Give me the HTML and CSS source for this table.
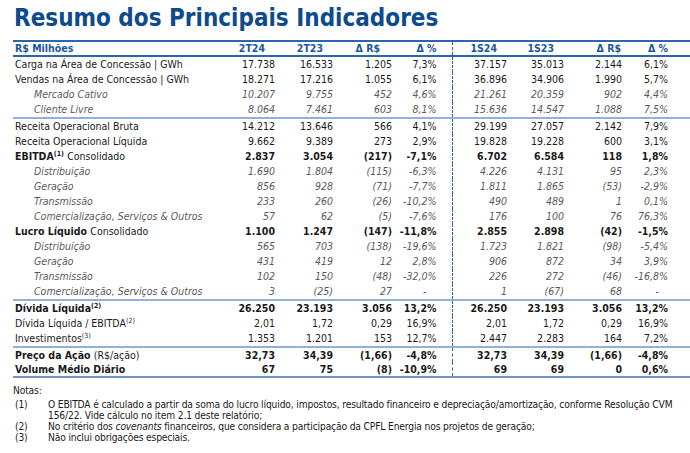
FILE: index.html
```html
<!DOCTYPE html>
<html lang="pt">
<head>
<meta charset="utf-8">
<link rel="stylesheet" href="styles.css">
</head>
<body>
<div class="page">
  <h1 class="title">Resumo dos Principais Indicadores</h1>
  <table class="ind">
    <colgroup>
      <col class="c-label"><col class="c1"><col class="c2"><col class="c3"><col class="c4">
      <col class="c5"><col class="c6"><col class="c7"><col class="c8">
    </colgroup>
    <thead>
      <tr class="head">
        <th class="lbl">R$ Milhões</th>
        <th class="h1">2T24</th><th class="h2">2T23</th><th class="h3">Δ R$</th><th class="h4 sep">Δ %</th>
        <th class="h5">1S24</th><th class="h6">1S23</th><th class="h7">Δ R$</th><th class="h8">Δ %</th>
      </tr>
    </thead>
    <tbody>
      <tr><td class="lbl">Carga na Área de Concessão | GWh</td><td>17.738</td><td>16.533</td><td>1.205</td><td class="sep">7,3%</td><td>37.157</td><td>35.013</td><td>2.144</td><td class="last">6,1%</td></tr>
      <tr><td class="lbl">Vendas na Área de Concessão | GWh</td><td>18.271</td><td>17.216</td><td>1.055</td><td class="sep">6,1%</td><td>36.896</td><td>34.906</td><td>1.990</td><td class="last">5,7%</td></tr>
      <tr class="sub"><td class="lbl">Mercado Cativo</td><td>10.207</td><td>9.755</td><td>452</td><td class="sep">4,6%</td><td>21.261</td><td>20.359</td><td>902</td><td class="last">4,4%</td></tr>
      <tr class="sub endl"><td class="lbl">Cliente Livre</td><td>8.064</td><td>7.461</td><td>603</td><td class="sep">8,1%</td><td>15.636</td><td>14.547</td><td>1.088</td><td class="last">7,5%</td></tr>

      <tr><td class="lbl">Receita Operacional Bruta</td><td>14.212</td><td>13.646</td><td>566</td><td class="sep">4,1%</td><td>29.199</td><td>27.057</td><td>2.142</td><td class="last">7,9%</td></tr>
      <tr><td class="lbl">Receita Operacional Líquida</td><td>9.662</td><td>9.389</td><td>273</td><td class="sep">2,9%</td><td>19.828</td><td>19.228</td><td>600</td><td class="last">3,1%</td></tr>
      <tr class="bold"><td class="lbl"><b>EBITDA</b><sup>(1)</sup> <span class="reg">Consolidado</span></td><td>2.837</td><td>3.054</td><td>(217)</td><td class="sep">-7,1%</td><td>6.702</td><td>6.584</td><td>118</td><td class="last">1,8%</td></tr>
      <tr class="sub"><td class="lbl">Distribuição</td><td>1.690</td><td>1.804</td><td>(115)</td><td class="sep">-6,3%</td><td>4.226</td><td>4.131</td><td>95</td><td class="last">2,3%</td></tr>
      <tr class="sub"><td class="lbl">Geração</td><td>856</td><td>928</td><td>(71)</td><td class="sep">-7,7%</td><td>1.811</td><td>1.865</td><td>(53)</td><td class="last">-2,9%</td></tr>
      <tr class="sub"><td class="lbl">Transmissão</td><td>233</td><td>260</td><td>(26)</td><td class="sep">-10,2%</td><td>490</td><td>489</td><td>1</td><td class="last">0,1%</td></tr>
      <tr class="sub"><td class="lbl">Comercialização, Serviços &amp; Outros</td><td>57</td><td>62</td><td>(5)</td><td class="sep">-7,6%</td><td>176</td><td>100</td><td>76</td><td class="last">76,3%</td></tr>
      <tr class="bold"><td class="lbl"><b>Lucro Líquido</b> <span class="reg">Consolidado</span></td><td>1.100</td><td>1.247</td><td>(147)</td><td class="sep">-11,8%</td><td>2.855</td><td>2.898</td><td>(42)</td><td class="last">-1,5%</td></tr>
      <tr class="sub"><td class="lbl">Distribuição</td><td>565</td><td>703</td><td>(138)</td><td class="sep">-19,6%</td><td>1.723</td><td>1.821</td><td>(98)</td><td class="last">-5,4%</td></tr>
      <tr class="sub"><td class="lbl">Geração</td><td>431</td><td>419</td><td>12</td><td class="sep">2,8%</td><td>906</td><td>872</td><td>34</td><td class="last">3,9%</td></tr>
      <tr class="sub"><td class="lbl">Transmissão</td><td>102</td><td>150</td><td>(48)</td><td class="sep">-32,0%</td><td>226</td><td>272</td><td>(46)</td><td class="last">-16,8%</td></tr>
      <tr class="sub endl"><td class="lbl">Comercialização, Serviços &amp; Outros</td><td>3</td><td>(25)</td><td>27</td><td class="sep dash">-</td><td>1</td><td>(67)</td><td>68</td><td class="last dash">-</td></tr>

      <tr class="bold"><td class="lbl">Dívida Líquida<sup>(2)</sup></td><td>26.250</td><td>23.193</td><td>3.056</td><td class="sep">13,2%</td><td>26.250</td><td>23.193</td><td>3.056</td><td class="last">13,2%</td></tr>
      <tr><td class="lbl">Dívida Líquida / EBITDA<sup>(2)</sup></td><td>2,01</td><td>1,72</td><td>0,29</td><td class="sep">16,9%</td><td>2,01</td><td>1,72</td><td>0,29</td><td class="last">16,9%</td></tr>
      <tr class="endl"><td class="lbl">Investimentos<sup>(3)</sup></td><td>1.353</td><td>1.201</td><td>153</td><td class="sep">12,7%</td><td>2.447</td><td>2.283</td><td>164</td><td class="last">7,2%</td></tr>

      <tr class="bold short"><td class="lbl"><b>Preço da Ação</b> <span class="reg">(R$/ação)</span></td><td>32,73</td><td>34,39</td><td>(1,66)</td><td class="sep">-4,8%</td><td>32,73</td><td>34,39</td><td>(1,66)</td><td class="last">-4,8%</td></tr>
      <tr class="bold short endl"><td class="lbl">Volume Médio Diário</td><td>67</td><td>75</td><td>(8)</td><td class="sep">-10,9%</td><td>69</td><td>69</td><td>0</td><td class="last">0,6%</td></tr>
    </tbody>
  </table>

  <div class="notes">
    <div class="notes-title">Notas:</div>
    <div class="note"><span class="num">(1)</span><span class="txt">O EBITDA é calculado a partir da soma do lucro líquido, impostos, resultado financeiro e depreciação/amortização, conforme Resolução CVM 156/22. Vide cálculo no item 2.1 deste relatório;</span></div>
    <div class="note"><span class="num">(2)</span><span class="txt">No critério dos <i>covenants</i> financeiros, que considera a participação da CPFL Energia nos projetos de geração;</span></div>
    <div class="note"><span class="num">(3)</span><span class="txt">Não inclui obrigações especiais.</span></div>
  </div>
</div>
</body>
</html>
```

FILE: styles.css
```css
html, body {
  margin: 0;
  padding: 0;
  background: #ffffff;
}

.page {
  padding-left: 13px;
  font-family: "DejaVu Sans Condensed", "DejaVu Sans", sans-serif;
  font-size: 10.5px;
  color: #1a1a1a;
}

.title {
  margin: 0;
  padding: 4px 0 0 1px;
  height: 42px;
  box-sizing: border-box;
  font-size: 24px;
  line-height: 28px;
  font-weight: bold;
  color: #0d4a8e;
  border-bottom: 2px solid #2e64a8;
}

.ind {
  border-collapse: collapse;
  table-layout: fixed;
  width: 677px;
}

.c-label { width: 215px; }
.c1 { width: 50px; }
.c2 { width: 58px; }
.c3 { width: 59px; }
.c4 { width: 57px; }
.c5 { width: 58px; }
.c6 { width: 57px; }
.c7 { width: 58px; }
.c8 { width: 65px; }

.ind td, .ind th {
  padding: 0 3px 0 0;
  height: 15px;
  line-height: 15px;
  text-align: right;
  white-space: nowrap;
  font-weight: normal;
}

.ind td.lbl, .ind th.lbl {
  text-align: left;
  padding-left: 2px;
}

.ind td.sep, .ind th.sep {
  padding-right: 15px;
  border-right: 1px dashed #2e64a8;
}

.ind td.last, .ind th.last { padding-right: 22px; }
.ind td.dash { padding-right: 25px; }
.ind td.last.dash { padding-right: 31px; }

.head th {
  font-weight: bold;
  color: #1c55a0;
  height: 13px;
  line-height: 13px;
  border-bottom: 2px solid #2e64a8;
  padding-top: 0;
}

.head th.h1, .head th.h2 { padding-right: 13px; }
.head th.h3 { padding-right: 15px; }
.head th.h5, .head th.h6 { padding-right: 13px; }
.head th.h7 { padding-right: 4px; }
.head th.h8 { padding-right: 22px; }

.sub td {
  font-style: italic;
  color: #5a5a5a;
}

.sub td.lbl { padding-left: 21px; }

.bold td { font-weight: bold; }
.bold td .reg { font-weight: normal; }

.short td {
  height: 14px;
  line-height: 14px;
}

.endl td { border-bottom: 2px solid #93b1d8; }
tr.endl:last-child td { border-bottom-color: #6f95c8; }

sup {
  font-size: 7px;
  line-height: 0;
  vertical-align: 4px;
}

.notes {
  margin-top: 7px;
  line-height: 11px;
  font-size: 10.2px;
  letter-spacing: -0.15px;
}

.notes-title { margin-bottom: 3px; }

.note {
  display: flex;
}

.note .num {
  flex: 0 0 33px;
  padding-left: 2px;
}

.note .txt {
  flex: 1;
  padding-right: 10px;
}
```
